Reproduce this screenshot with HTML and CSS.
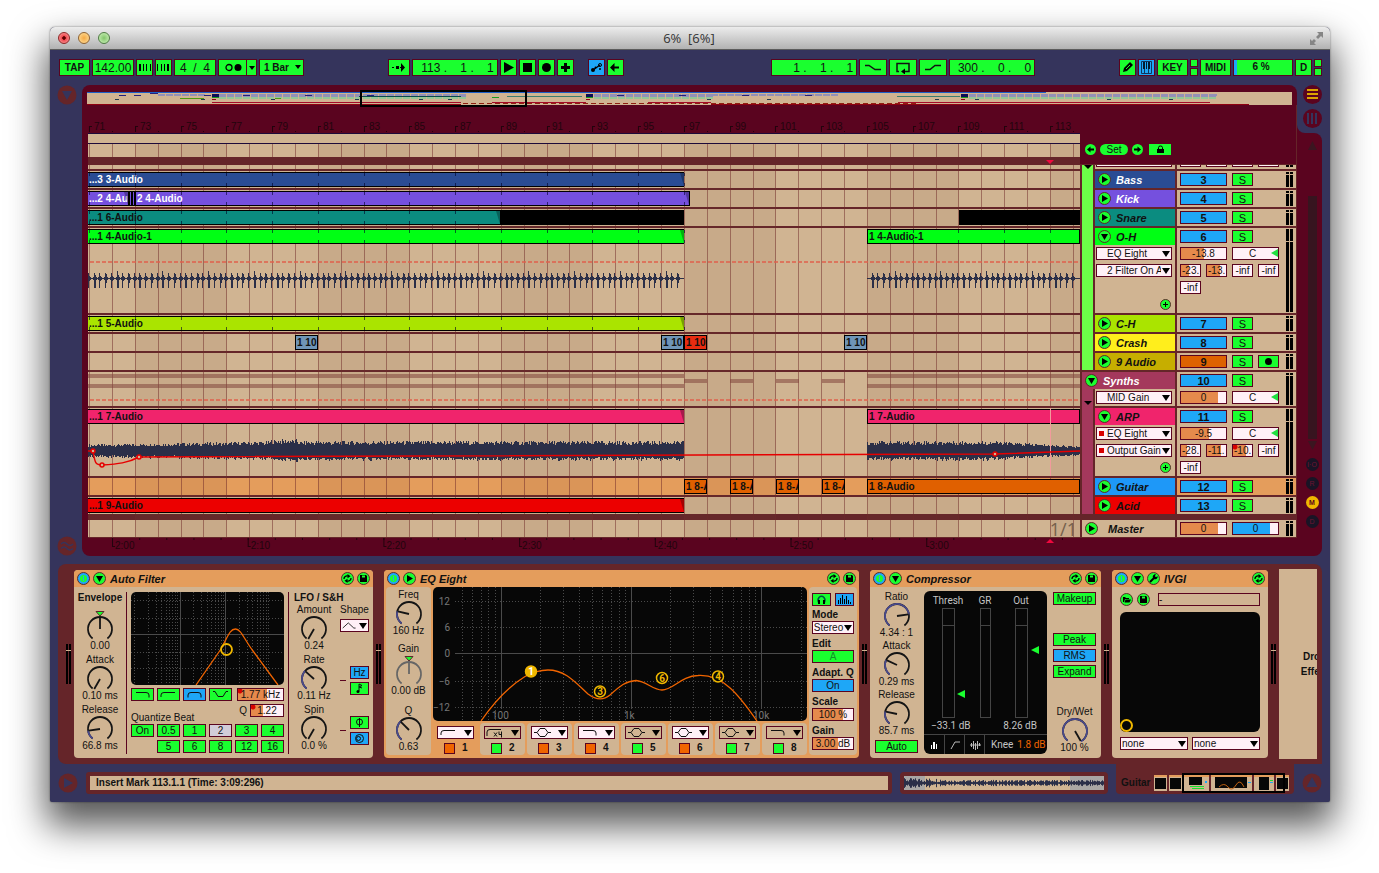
FILE: index.html
```html
<!DOCTYPE html>
<html lang="en">
<head>
<meta charset="utf-8">
<title>6% [6%]</title>
<link rel="stylesheet" href="styles.css">
</head>
<body>
<svg class="defs" aria-hidden="true">
  <defs>
    <symbol id="i-play" viewBox="0 0 13 13"><circle class="disc" cx="6.5" cy="6.5" r="6"/><path d="M4 3v7l6-3.500z"/></symbol>
    <symbol id="i-fold" viewBox="0 0 13 13"><circle class="disc" cx="6.500" cy="6.500" r="6"/><path d="M3 4h7l-3.500 6z"/></symbol>
    <symbol id="i-power" viewBox="0 0 13 13"><circle class="disc-on" cx="6.500" cy="6.500" r="6"/><circle cx="6.500" cy="6.500" r="3.500" fill="#1aff2f"/><path d="M6 4h1v5h-1z" fill="#1ea7f7"/></symbol>
    <symbol id="i-swap" viewBox="0 0 13 13"><circle class="disc" cx="6.500" cy="6.500" r="6"/><path d="M3 7a3 3 0 0 1 4-3M10 6a3 3 0 0 1-4 3" fill="none" stroke="#000" stroke-width="1.300"/><path d="M6.500 2l3 2.200-3 2zM6.500 11l-3-2.200 3-2z"/></symbol>
    <symbol id="i-save" viewBox="0 0 13 13"><circle class="disc" cx="6.500" cy="6.500" r="6"/><path d="M3 3h6l1 1v6H3z"/><path d="M5 3.500h3v2H5z" fill="#1aff2f"/></symbol>
    <symbol id="i-folder" viewBox="0 0 13 13"><circle class="disc" cx="6.500" cy="6.500" r="6"/><path d="M3 4h2l1 1h3v1H5L4 9H3zM5.500 6.500H11L9.500 9.500h-5z"/></symbol>
    <symbol id="i-wrench" viewBox="0 0 13 13"><circle class="disc" cx="6.500" cy="6.500" r="6"/><path d="M3.500 9.500L7 6" stroke="#000" stroke-width="2" stroke-linecap="round"/><path d="M6 6a2.500 2.500 0 0 1 3-3.500L7.800 4l1.200 1.200L10.500 4A2.500 2.500 0 0 1 7 7z"/></symbol>
    <symbol id="i-plus" viewBox="0 0 13 13"><circle class="disc" cx="6.500" cy="6.500" r="5"/><path d="M6 4h1v2h2v1H7v2H6V7H4V6h2z"/></symbol>
    <symbol id="i-left" viewBox="0 0 11 11"><circle cx="5.500" cy="5.500" r="5.500" fill="#1aff2f"/><path d="M2 5.500L5.500 2.500V4.500H9V6.500H5.500V8.500z"/></symbol>
    <symbol id="i-right" viewBox="0 0 11 11"><circle cx="5.500" cy="5.500" r="5.500" fill="#1aff2f"/><path d="M9 5.500L5.500 2.500V4.500H2V6.500H5.500V8.500z"/></symbol>
    <symbol id="f-hp" viewBox="0 0 21 11"><path class="ln" d="M3 8V6q0-2.500 3-2.500h11"/></symbol>
    <symbol id="f-lp" viewBox="0 0 21 11"><path class="ln" d="M4 3.500h10q3 0 3 2.500v2.500"/></symbol>
    <symbol id="f-bp" viewBox="0 0 21 11"><path class="ln" d="M4 8.500V6q0-2.500 3-2.500h7q3 0 3 2.500v2.500"/></symbol>
    <symbol id="f-notch" viewBox="0 0 21 11"><path class="ln" d="M3 2.500h2l3 5h5l3-5h2"/></symbol>
    <symbol id="f-bell" viewBox="0 0 21 11"><path class="ln" d="M2 5.500h3l3-4h5l3 4h3M5 5.500l3 4h5l3-4"/></symbol>
    <symbol id="f-x4" viewBox="0 0 21 11"><path class="ln" d="M2 9V5q0-2.500 3-2.500h11M9 5.500l3 4M12 5.500l-3 4M14 4.500v3h3M16.500 4.500v6"/></symbol>
    <symbol id="f-tri" viewBox="0 0 21 11"><path class="ln" d="M2 8.500l6.500-6 6.500 6h2"/></symbol>
  </defs>
</svg>

<div class="window">
  <header class="titlebar">
    <div class="lights"><button class="light red" aria-label="Close"></button><button class="light amber" aria-label="Minimise"></button><button class="light lime" aria-label="Zoom"></button></div>
    <h1>6%&nbsp; [6%]</h1>
    <button class="expand" aria-label="Full screen"><svg width="15" height="15"><path d="M8 1h6v6l-2-2-3 3-2-2 3-3zM1 8l2 2 2-2 2 2-2 2 2 2H1z" fill="#858585"/></svg></button>
  </header>

  <nav class="toolbar">
    <div class="set">
      <button class="b w31 strong">TAP</button>
      <input class="b w42 num" value="142.00" aria-label="Tempo">
      <button class="b w17" aria-label="Nudge down"><svg width="13" height="11"><path d="M1 2h2v7H1zM5 2h1v7H5zM8 2h1v7H8zM12 2h1v7h-1z"/></svg></button>
      <button class="b w17" aria-label="Nudge up"><svg width="13" height="11"><path d="M0 2h1v7H0zM4 2h1v7H4zM7 2h1v7H7zM10 2h2v7h-2z"/></svg></button>
      <input class="b w42 num" value="4  /  4" aria-label="Time signature">
      <div class="pair"><button class="b w29" aria-label="Metronome"><svg width="18" height="11"><circle cx="5" cy="5.500" r="3" fill="none" stroke="#000" stroke-width="1.300"/><circle cx="14" cy="5.500" r="3.500"/></svg></button><button class="b w11" aria-label="Metronome options"><i class="tri"></i></button></div>
      <div class="pick bar"><select class="b w45 strong" aria-label="Quantization"><option>1 Bar</option></select></div>
    </div>
    <i class="space s84"></i>
    <div class="set">
      <button class="b w22" aria-label="Follow"><svg width="14" height="9"><path d="M0 4h2v1H0zM9 0l4 4.500L9 9z"/><path d="M4 3h3v3H4z"/><path d="M8 4h2v1H8z"/></svg></button>
      <input class="b w86 num end" value="113 .    1 .    1" aria-label="Position">
      <button class="b w17" aria-label="Play"><svg width="11" height="11"><path d="M1 0v11l10-5.500z"/></svg></button>
      <button class="b w17" aria-label="Stop"><svg width="9" height="9"><path d="M0 0h9v9H0z"/></svg></button>
      <button class="b w17" aria-label="Record"><svg width="9" height="9"><circle cx="4.500" cy="4.500" r="4.500"/></svg></button>
      <button class="b w17" aria-label="Overdub"><svg width="9" height="9"><path d="M3 0h3v3h3v3H6v3H3V6H0V3h3z"/></svg></button>
      <button class="b w17 on lead" aria-label="Automation arm"><svg width="13" height="11"><path d="M3 8l7-5" stroke="#000" stroke-width="1.300"/><circle cx="3" cy="8" r="2"/><circle cx="5.500" cy="5.500" r="1"/><circle cx="10" cy="3" r="1.500" fill="none" stroke="#000"/><circle cx="10" cy="7" r="1"/></svg></button>
      <button class="b w17" aria-label="Back to arrangement"><svg width="10" height="9"><path d="M0 4.500L4.500 0v3.500H9v2H4.500V9z"/></svg></button>
    </div>
    <i class="space s148"></i>
    <div class="set">
      <input class="b w86 num end" value="1 .    1 .    1" aria-label="Loop start">
      <button class="b w28" aria-label="Punch in"><svg width="18" height="11"><path class="ln" d="M1 3.500h4l6 4h6" stroke-width="1.500"/></svg></button>
      <button class="b w28" aria-label="Loop"><svg width="16" height="12"><path class="ln" d="M4 9.500H2v-8h12v8H9" stroke-width="1.500"/><path d="M6 9.500l4-3v6z"/></svg></button>
      <button class="b w28" aria-label="Punch out"><svg width="18" height="11"><path class="ln" d="M1 7.500h5l5-4h6" stroke-width="1.500"/></svg></button>
      <input class="b w86 num end" value="300 .    0 .    0" aria-label="Loop length">
    </div>
    <i class="space s83"></i>
    <div class="set">
      <button class="b w17" aria-label="Draw mode"><svg width="13" height="13"><path d="M2 11l1-4 6-6 3 3-6 6z"/><path d="M5 8l4-4" stroke="#1aff2f"/></svg></button>
      <button class="b w17 on" aria-label="Computer keyboard"><svg width="11" height="13"><path d="M.5.500h10v12H.5zM3.500 7v5M7.500 7v5" fill="none" stroke="#12345c"/><path d="M2 1h2v7H2zM5 1h1v7H5zM7 1h2v7H7z" fill="#021a30"/></svg></button>
      <button class="b w31 strong">KEY</button>
      <div class="leds"><i></i><i></i></div>
      <button class="b w31 strong">MIDI</button>
      <output class="b w60 strong cpu">6 %</output>
      <button class="b w17 strong">D</button>
      <div class="leds"><i></i><i></i></div>
    </div>
  </nav>

  <main class="arranger">
    <div class="rail">
      <button class="ghost" aria-label="Browser"><svg width="20" height="20"><circle cx="10" cy="10" r="9.500"/><path d="M5 6h10l-5 9z" class="cut"/></svg></button>
      <button class="ghost" aria-label="Groove pool"><svg width="20" height="20"><circle cx="10" cy="10" r="9.500"/><path d="M4 8q3-3 6 0t6 0M4 12.500q3-3 6 0t6 0" fill="none" stroke="#35345c" stroke-width="1.500"/></svg></button>
    </div>
    <section class="panel">
      <div class="overview"><svg id="overview" viewBox="0 0 1205 13" preserveAspectRatio="none"></svg><i class="viewbox"></i></div>
      <div class="stage">
        <div class="timeline">
          <svg class="ruler" id="ruler" height="28"></svg>
          <div class="scrub"></div>
          <div class="marks"><svg class="gridlines" viewBox="0 0 992 100" preserveAspectRatio="none"></svg></div>
          <div class="band"><i class="locator"></i></div>
          <div class="lanes" id="lanes"><svg class="gridlines" viewBox="0 0 992 100" preserveAspectRatio="none"></svg></div>
          <svg class="clock" id="clock" height="18"></svg>
        </div>
        <div class="heads">
          <div class="locators">
            <button class="bare" aria-label="Previous locator"><svg width="11" height="11"><use href="#i-left"/></svg></button>
            <button class="pill">Set</button>
            <button class="bare" aria-label="Next locator"><svg width="11" height="11"><use href="#i-right"/></svg></button>
            <button class="lock" aria-label="Lock envelopes"><svg width="9" height="9"><path d="M1 4h7v4H1z"/><path d="M2.500 4V2.500q0-1.500 2-1.500t2 1.500V4" fill="none" stroke="#000"/></svg></button>
          </div>
          <div id="heads"></div>
        </div>
      </div>
    </section>
    <aside class="side">
      <div class="views"><div>
        <button class="view" aria-label="Arrangement view"><svg width="19" height="19"><circle cx="9.500" cy="9.500" r="9.500"/><path d="M4 4h11v2H4zM4 8h11v2H4zM4 12h11v2H4z" fill="#dca500"/></svg></button>
        <button class="view" aria-label="Session view"><svg width="19" height="19"><circle cx="9.500" cy="9.500" r="9.500"/><path d="M4 4h2v11H4zM8 4h2v11H8zM12 4h2v11h-2z" fill="#35345c"/></svg></button>
      </div></div>
      <div class="scroller">
        <svg width="9" height="9"><path d="M0 9h9L4.500 0z"/></svg>
        <i class="thumb"></i>
        <svg width="9" height="9"><path d="M0 0h9L4.500 9z"/></svg>
        <div class="dots"><button>I·O</button><button>R</button><button class="lit">M</button><button>D</button></div>
      </div>
    </aside>
  </main>

  <section class="chain">
    <i class="meter2 first"></i>
    <article class="device filter">
      <header><svg width="13" height="13"><use href="#i-power"/></svg><svg width="13" height="13"><use href="#i-fold"/></svg><h2>Auto Filter</h2><svg width="13" height="13"><use href="#i-swap"/></svg><svg width="13" height="13"><use href="#i-save"/></svg></header>
      <div class="filter-body">
        <div class="col env">
          <h3>Envelope</h3>
          <div class="dial mark" data-v="0.00" data-turn="0"></div>
          <div class="dial" data-label="Attack" data-v="0.10 ms" data-turn="-150"></div>
          <div class="dial" data-label="Release" data-v="66.8 ms" data-turn="-98" data-arc="1"></div>
        </div>
        <div class="col centre">
          <svg class="screen" id="filter-screen" width="153" height="93"></svg>
          <div class="row6">
            <button class="k"><svg width="21" height="11"><use href="#f-lp"/></svg></button><button class="k"><svg width="21" height="11"><use href="#f-hp"/></svg></button><button class="k on"><svg width="21" height="11"><use href="#f-bp"/></svg></button><button class="k"><svg width="21" height="11"><use href="#f-notch"/></svg></button>
            <input class="v auto freq" value="1.77 kHz" aria-label="Frequency" style="--v:64%">
          </div>
          <label class="q">Q <input class="v auto" value="1.22" style="--v:38%"></label>
          <p>Quantize Beat</p>
          <div class="row6 beats"><button class="k">On</button><button class="k">0.5</button><button class="k">1</button><button class="k grey">2</button><button class="k">3</button><button class="k">4</button><button class="k second">5</button><button class="k">6</button><button class="k">8</button><button class="k">12</button><button class="k">16</button></div>
        </div>
        <div class="col lfo">
          <h3>LFO / S&amp;H</h3>
          <div class="lfo-grid">
            <div class="dial" data-label="Amount" data-v="0.24" data-turn="-150"></div>
            <div class="shape"><label for="shape">Shape</label><div class="pick"><select class="v" id="shape"><option> </option></select><svg width="18" height="11"><use href="#f-tri"/></svg></div></div>
            <div class="dial" data-label="Rate" data-v="0.11 Hz" data-turn="-48" data-arc="1"></div>
            <div class="sw"><button class="k on">Hz</button><button class="k" aria-label="Sync"><svg width="9" height="11"><path d="M4 1v7M4 1l3 1.500L4 4l3 1" class="ln"/><circle cx="3" cy="8.500" r="1.500"/></svg></button></div>
            <div class="dial" data-label="Spin" data-v="0.0 %" data-turn="-150"></div>
            <div class="sw"><button class="k" aria-label="Phase"><svg width="9" height="11"><circle cx="4.500" cy="5" r="3" class="ln"/><path d="M4.500 1v9" class="ln"/></svg></button><button class="k on" aria-label="Spin mode"><svg width="11" height="11"><circle cx="5.500" cy="5.500" r="4" class="ln"/><circle cx="4.500" cy="5.500" r="2" class="ln"/></svg></button></div>
          </div>
        </div>
      </div>
    </article>
    <i class="meter2"></i>
    <article class="device eq">
      <header><svg width="13" height="13"><use href="#i-power"/></svg><svg width="13" height="13"><use href="#i-play"/></svg><h2>EQ Eight</h2><svg width="13" height="13"><use href="#i-swap"/></svg><svg width="13" height="13"><use href="#i-save"/></svg></header>
      <div class="eq-body">
        <div class="card knobs">
          <div class="dial" data-label="Freq" data-v="160 Hz" data-turn="-77" data-arc="1"></div>
          <div class="dial mark dim" data-label="Gain" data-v="0.00 dB" data-turn="0"></div>
          <div class="dial" data-label="Q" data-v="0.63" data-turn="-45" data-arc="1"></div>
        </div>
        <div class="eq-main">
          <svg class="screen" id="eq-screen" width="374" height="134"></svg>
          <div class="bands" id="bands"></div>
        </div>
        <div class="card opts">
          <div class="two"><button class="k" aria-label="Audition"><svg width="11" height="11"><path d="M3 9Q1 6 3 3.500q2.500-2.500 5 0Q10 6 8 9" fill="none" stroke="#054" stroke-width="1.500"/><path d="M2 6h2v4H2zM7 6h2v4H7z"/></svg></button><button class="k on" aria-label="Analyzer"><svg width="15" height="11"><path d="M1 6h1v4H1zM3 4h1v6H3zM5 1h1v9H5zM7 5h1v5H7zM9 2h1v8H9zM11 6h1v4h-1zM13 8h1v2h-1z"/></svg></button></div>
          <label for="mode">Mode</label><div class="pick"><select class="v" id="mode"><option>Stereo</option></select></div>
          <label for="edit">Edit</label><button class="k faint" id="edit">A</button>
          <label for="adapt">Adapt. Q</label><button class="k on" id="adapt">On</button>
          <label for="scale">Scale</label><input class="v" id="scale" value="100 %" style="--v:74%">
          <label for="gain">Gain</label><input class="v" id="gain" value="3.00 dB" style="--v:62%">
        </div>
      </div>
    </article>
    <i class="meter2"></i>
    <article class="device comp">
      <header><svg width="13" height="13"><use href="#i-power"/></svg><svg width="13" height="13"><use href="#i-fold"/></svg><h2>Compressor</h2><svg width="13" height="13"><use href="#i-swap"/></svg><svg width="13" height="13"><use href="#i-save"/></svg></header>
      <div class="comp-body">
        <div class="col">
          <div class="dial" data-label="Ratio" data-v="4.34 : 1" data-turn="82" data-arc="1"></div>
          <div class="dial" data-label="Attack" data-v="0.29 ms" data-turn="-65" data-arc="1"></div>
          <div class="dial" data-label="Release" data-v="85.7 ms" data-turn="-78" data-arc="1"></div>
          <button class="k">Auto</button>
        </div>
        <div class="black">
          <div class="slots">
            <div><span>Thresh</span><i></i></div><div><span>GR</span><i class="thin"></i></div><div><span>Out</span><i></i></div>
          </div>
          <div class="reads"><span>−33.1 dB</span><span>8.26 dB</span></div>
          <div class="modes"><button aria-label="Collapsed view"><svg width="12" height="12"><path d="M3 6h1v4H3zM5 3h2v7H5zM8 5h1v5H8z" fill="#fff"/></svg></button><button aria-label="Curve view"><svg width="12" height="12"><path d="M2 10l4-7h5" fill="none" stroke="#bbb"/></svg></button><button aria-label="Activity view"><svg width="12" height="12"><path d="M2.500 4v4M4.500 2v8M6.500 4v7M8.500 2v8M10.500 4v3M1 6h11" stroke="#bbb" fill="none"/></svg></button><span>Knee <b>1.8 dB</b></span></div>
          <i class="arrow thr"></i><i class="arrow out"></i>
        </div>
        <div class="col right">
          <button class="k">Makeup</button>
          <div class="trio"><button class="k">Peak</button><button class="k on">RMS</button><button class="k">Expand</button></div>
          <div class="dial" data-label="Dry/Wet" data-v="100 %" data-turn="150" data-arc="1"></div>
        </div>
      </div>
    </article>
    <i class="meter2"></i>
    <article class="device ivgi">
      <header><svg width="13" height="13"><use href="#i-power"/></svg><svg width="13" height="13"><use href="#i-fold"/></svg><svg width="13" height="13"><use href="#i-wrench"/></svg><h2>IVGI</h2><svg width="13" height="13"><use href="#i-swap"/></svg></header>
      <div class="ivgi-body">
        <div class="preset"><button class="bare" aria-label="Open preset"><svg width="13" height="13"><use href="#i-folder"/></svg></button><button class="bare" aria-label="Save preset"><svg width="13" height="13"><use href="#i-save"/></svg></button><input value="-" aria-label="Preset name"></div>
        <div class="pad"><svg width="13" height="13"><circle cx="6.500" cy="6.500" r="5.500" fill="none" stroke="#efb700" stroke-width="2"/></svg></div>
        <div class="params"><div class="pick"><select class="v" aria-label="X parameter"><option>none</option></select></div><div class="pick"><select class="v" aria-label="Y parameter"><option>none</option></select></div></div>
      </div>
    </article>
    <i class="meter2"></i>
    <div class="drop"><p>Drop Audio<br>Effects Here</p></div>
  </section>

  <footer class="status">
    <button class="ghost" aria-label="Info view"><svg width="20" height="20"><circle cx="10" cy="10" r="9.500"/><path d="M6 5v10l9-5z" class="cut"/></svg></button>
    <p class="info">Insert Mark 113.1.1 (Time: 3:09:296)</p>
    <svg class="sample" id="sample" width="200" height="14" viewBox="0 0 200 15" preserveAspectRatio="none"></svg>
    <div class="tab"><span>Guitar</span>
      <div class="minis"><svg width="136" height="16" id="minis"></svg><i class="mini-view"></i></div>
    </div>
    <button class="ghost" aria-label="Detail view"><svg width="20" height="20"><circle cx="10" cy="10" r="9.500"/><path d="M4.500 14h11L10 4z" class="cut"/></svg></button>
  </footer>
</div>
<script src="app.js"></script>
</body>
</html>
```

FILE: styles.css
```css
:root {
  --navy: #35345c;
  --wine: #5a041f;
  --brick: #652529;
  --tan: #d0b492;
  --amber: #e49d5c;
  --green: #1aff2f;
  --blue: #1ea7f7;
  --field: #fff0f7;
  --fill: #e58a4c;
}
* { box-sizing: border-box; }
body {
  margin: 0;
  padding: 27px 49px 71px 50px;
  background: #fff;
  color: #111;
  font: 10px/12px "Liberation Sans", Arial, sans-serif;
  overflow: hidden;
}
h1, h2, h3, p { margin: 0; font-size: 10px; }
button, input, select { font: inherit; color: inherit; padding: 0; margin: 0; border-radius: 0; outline: 0; }
button { display: flex; align-items: center; justify-content: center; }
svg { display: block; flex: none; }
i { display: block; }
.defs { position: absolute; width: 0; height: 0; }
.disc { fill: #1aff2f; stroke: #5a2a2a; }
.disc-on { fill: #1ea7f7; stroke: #5a2a2a; }
.ln { fill: none; stroke: #111; }
.bare { background: none; border: 0; }

.window {
  background: var(--navy);
  border-radius: 5px 5px 2px 2px;
  box-shadow: 0 0 2px rgba(0,0,0,.5), 0 20px 36px 4px rgba(0,0,0,.66);
}
.titlebar {
  display: grid;
  grid-template-columns: 1fr auto 1fr;
  align-items: center;
  height: 23px;
  padding: 0 6px 0 8px;
  border-radius: 5px 5px 0 0;
  border-bottom: 1px solid #5c5c5c;
  background: linear-gradient(#ececec, #b2b2b2);
}
.titlebar h1 { padding-right: 4px; font: 13px/20px "Open Sans", sans-serif; color: #333; }
.lights { display: flex; gap: 8px; }
.light { width: 12px; height: 12px; border: 1px solid #6b4a3a; border-radius: 50%; }
.light.red { background: radial-gradient(#5b0000 0 20%, #f04a50 30%, #ffb0b0); border-color: #8e2525; }
.light.amber { background: radial-gradient(#f5a943, #ffe2a0); border-color: #8f6230; }
.light.lime { background: radial-gradient(#82c56a, #d2f5c0); border-color: #4f7b43; }
.expand { justify-self: end; border: 0; background: none; }

.toolbar { display: flex; padding: 9px 8px 9px 9px; }
.set, .pair { display: flex; gap: 2px; }
.pair { gap: 0; }
.pair .w11 { margin-left: -1px; }
.space { flex: 84 1 0; }
.s148 { flex-grow: 148; }
.b { height: 17px; border: 1px solid var(--wine); background: var(--green); text-align: center; }
.num { font-size: 12px; white-space: pre; }
.end { text-align: right; padding-right: 3px; }
.strong { font-weight: bold; }
.on { background: var(--blue) !important; }
.lead { margin-left: 12px; }
.w11 { width: 11px; } .w17 { width: 17px; } .w22 { width: 22px; } .w28 { width: 28px; }
.w29 { width: 29px; } .w31 { width: 31px; } .w42 { width: 42px; } .w45 { width: 45px; }
.w60 { width: 60px; } .w86 { width: 86px; }
.cpu { line-height: 14px; background: linear-gradient(90deg, var(--blue) 3px, var(--green) 3px); padding-right: 4px; }
.leds { display: grid; gap: 1px; width: 8px; }
.leds i { border: 1px solid var(--wine); background: var(--green); }
.tri { border: 3px solid transparent; border-top: 4px solid #000; border-bottom: 0; }
.pick { position: relative; }
.pick select { appearance: none; width: 100%; padding-right: 10px; text-align: center; }
.pick.bar select { width: 45px; padding: 0 14px 0 4px; text-align: left; }
.pick::after { content: ""; position: absolute; right: 2px; top: 4px; border: 4px solid transparent; border-top: 6px solid #000; border-bottom: 0; pointer-events: none; }
.pick.bar::after { border-width: 4px 3px 0; right: 3px; top: 6px; }
.pick svg { position: absolute; left: 1px; top: 1px; }

.arranger { display: flex; padding-right: 8px; }
.rail { width: 32px; display: flex; flex-direction: column; justify-content: space-between; align-items: flex-end; padding-right: 5px; }
.ghost { border: 0; background: none; fill: var(--brick); }
.cut { fill: var(--navy); }
.panel { flex: 1; min-width: 0; padding: 7px 0 0 5px; background: var(--wine); border-radius: 8px 8px 0 8px; }
.overview { position: relative; height: 13px; margin-right: 5px; background: var(--tan); }
.overview svg { width: 100%; height: 13px; }
.viewbox { position: absolute; left: 22.65%; width: 13.9%; top: -2px; height: 17px; border: 2px solid #000; }
.stage { display: grid; grid-template-columns: minmax(0, 1fr) 217px; padding-left: 1px; }
.ruler, .clock { width: 100%; font-size: 10px; fill: #22040d; }
.scrub { height: 11px; background: var(--tan); border: solid #1d0a3a; border-width: 1px 0; }
.marks { position: relative; height: 13px; background: var(--tan); }
.band { height: 8px; background: var(--brick); }
.locator { position: relative; left: 97%; top: 3px; width: 0; border: 4px solid transparent; border-top: 4px solid #f0083e; border-bottom: 0; margin-left: -4px; }
.lanes { position: relative; }
.gridlines { position: absolute; inset: 0; width: 100%; height: 100%; z-index: 1; pointer-events: none; }
.lane { position: relative; height: calc(var(--rows) * 17px + 2px); background: var(--tan); border-bottom: 2px solid var(--brick); }
.lane.sliver, .track.sliver { height: 6px; overflow: hidden; }
.lane.amber { background: var(--amber); }
.lane.last { border-bottom-width: 1px; height: 18px; }
.lane > svg { position: absolute; left: 0; top: 0; width: 100%; height: 100%; z-index: 3; }
.before-last { border-bottom-width: 6px !important; height: 23px !important; }
.clip {
  position: absolute; top: 1px; height: 15px; z-index: 2; overflow: hidden;
  border: solid #000; border-width: 1px 0; padding-left: 1px;
  font-weight: bold; line-height: 13px; white-space: nowrap;
}
.clip.boxed { border-width: 1px; }
.clip.faded::after { content: ""; position: absolute; right: 0; top: 0; border-top: 13px solid rgba(0,0,0,.3); border-left: 4px solid transparent; }
.step { position: absolute; right: 3px; bottom: 1px; z-index: 3; font: 18px/14px "Open Sans", sans-serif; color: #75604c; }

.heads { border-right: 1px solid var(--brick); margin-bottom: 18px; }
#heads { border-left: 2px solid var(--brick); border-top: 1px solid var(--brick); }
.locators { display: flex; align-items: flex-end; gap: 4px; height: 59px; padding: 0 0 9px 5px; }
.pill { width: 28px; height: 11px; border: 0; border-radius: 6px; background: var(--green); }
.lock { width: 22px; height: 11px; margin-left: 2px; border: 0; background: var(--green); }
.group { display: flex; background: var(--strip); }
.strip { width: 13px; border-right: 2px solid var(--brick); }
.strip.top { border-bottom: 2px solid var(--brick); }
.strip i { margin: 0 0 0 2px; width: 8px; border: 4px solid transparent; border-top: 4px solid #000; border-bottom: 0; }
.strip.low { border-bottom: 6px solid var(--brick); }
.strip.low i { margin-top: 29px; }
.group-body { flex: 1; min-width: 0; }
.track { display: grid; grid-template-columns: minmax(0, 1fr) 119px; height: calc(var(--rows) * 17px + 2px); border-bottom: 2px solid var(--brick); background: var(--tan); }
.track.amber { background: var(--amber); }
.track.last { border-bottom-width: 1px; height: 18px; }
.name { position: relative; border-right: 2px solid var(--brick); }
.sliver .name { padding: 0 3px 0 1px; }
.sliver .mixer { padding-top: 0; }
.stub { height: 2px; background: var(--field); border: solid var(--wine); border-width: 0 1px 1px; }
.label { display: flex; align-items: center; gap: 5px; height: 17px; padding-left: 3px; background: var(--c); font: italic bold 11px/16px "Liberation Sans", Arial, sans-serif; }
.label button { border: 0; background: none; }
.label.wide { position: relative; margin-left: -13px; z-index: 1; }
.label.roomy { gap: 10px; }
.chooser { display: grid; gap: 4px; padding: 2px 3px 2px 1px; }
.chooser .pick select { padding-left: 10px; padding-right: 10px; text-align: left; text-overflow: clip; }
.chooser.flagged .pick::before { content: ""; position: absolute; left: 3px; top: 4px; width: 5px; height: 5px; background: #d80000; }
.add { position: absolute; right: 3px; bottom: 2px; }
.mixer { display: flex; justify-content: space-between; padding: 1px 3px; }
.cells { display: grid; grid-template-columns: repeat(4, 21px); grid-auto-rows: 13px; gap: 4px 5px; padding-top: 1px; align-content: start; }
.sliver .cells { grid-auto-rows: 2px; padding: 0; }
.cells .wide { grid-column: span 2; }
.cells .wide.start { grid-column: 1 / span 2; }
.cells button { border: 1px solid var(--wine); background: var(--green); font-size: 11px; }
.cells .act { grid-column: 1 / span 2; background: var(--blue); font-weight: bold; }
.cells .act.off { background: #dd6200; }
.v { height: 13px; width: 100%; min-width: 0; border: 1px solid var(--wine); background: linear-gradient(90deg, var(--fill) var(--v, 0%), var(--field) 0); text-align: center; line-height: 11px; }
.cells .v.cut-off { text-align: left; padding-left: 1px; }
.cells .v.cool { --fill: #1ea7f7; }
.pan { position: relative; }
.pan .v { padding-right: 6px; display: block; }
.pan::after { content: ""; position: absolute; right: 1px; top: 2px; border: 4px solid transparent; border-right: 7px solid #20e040; border-left: 0; }
.auto, .has-dot { background-image: radial-gradient(circle at 2px 2px, #d80000 2px, transparent 3px), linear-gradient(90deg, var(--fill) var(--v, 0%), var(--field) 0); }
.bars { width: 7px; background: linear-gradient(90deg, #000 3px, transparent 3px 4px, #000 4px); position: relative; }
.bars::after { content: ""; position: absolute; inset: 2px 0 auto; height: 1px; background: var(--tan); }
.bars.tall::after { top: 12px; }

.side { width: 25px; display: flex; flex-direction: column; }
.views { background: var(--wine); }
.views > div { display: grid; gap: 5px; justify-items: end; align-content: start; height: 48px; background: var(--navy); border-bottom-left-radius: 8px; }
.view { border: 0; background: none; fill: var(--wine); }
.scroller { flex: 1; display: flex; flex-direction: column; align-items: center; padding: 8px 0 28px 5px; background: var(--wine); border-radius: 0 8px 8px 0; fill: #3b1520; }
.thumb { flex: 1; width: 9px; margin: 46px 0 2px; background: #37141f; }
.dots { display: grid; gap: 6px; margin-top: 8px; }
.dots button { width: 13px; height: 13px; border: 0; border-radius: 50%; background: #191425; color: #6d1533; font-size: 7px; line-height: 13px; }
.dots .lit { background: #efb700; color: #5a041f; font-weight: bold; }

.chain { display: flex; gap: 3px; height: 200px; margin: 8px 8px 0; padding: 6px 5px 6px 8px; background: var(--brick); border-radius: 8px 8px 0 8px; }
.meter2 { flex: none; width: 5px; height: 40px; margin-top: 74px; background: linear-gradient(transparent 6px, #d0b492 6px 7px, transparent 7px), linear-gradient(90deg, #000 2px, var(--brick) 2px 3px, #000 3px); }
.device { flex: none; border-radius: 4px; background: var(--tan); overflow: hidden; }
.device header { display: flex; align-items: center; gap: 3px; height: 17px; padding: 0 3px; background: var(--amber); }
.device h2 { flex: 1; padding-left: 1px; font: italic bold 11px/16px "Liberation Sans", Arial, sans-serif; }
.k { height: 13px; border: 1px solid var(--wine); background: var(--green); line-height: 11px; white-space: nowrap; }
.k.grey { background: #d2ccd8; }
.k.faint { color: #158f2a; }
.screen { border-radius: 5px; background: #070707; }
.col { display: flex; flex-direction: column; }
.dial { display: flex; flex-direction: column; align-items: center; height: 50px; white-space: nowrap; }
.dial span { height: 12px; }

.filter { width: 299px; }
.filter-body { display: grid; grid-template-columns: 52px 163px 1fr; padding-top: 5px; height: 166px; }
.env { align-items: center; }
.env h3, .lfo h3 { height: 12px; }
.centre { padding: 0 4px; border: solid var(--wine); border-width: 0 1px; }
.row6 { display: grid; grid-template-columns: repeat(6, 23px); gap: 3px; margin-top: 3px; }
.freq { grid-column: 5 / span 2; justify-self: end; width: 47px; }
.q { display: flex; align-items: center; justify-content: flex-end; gap: 3px; margin-top: 3px; }
.q input { width: 34px; }
.centre p { height: 7px; line-height: 2px; font-weight: normal; }
.beats { margin-top: 0; }
.beats .second { grid-column-start: 2; }
.lfo { padding: 0 4px 0 5px; }
.lfo-grid { display: grid; grid-template-columns: 40px 29px; justify-content: space-between; }
.shape label { display: block; height: 15px; }
.sw { display: grid; gap: 3px; justify-items: end; align-content: start; padding-top: 12px; background: linear-gradient(var(--wine), var(--wine)) 0 26px / 6px 1px no-repeat; }
.sw .k { width: 19px; }

.eq { width: 475px; background: var(--amber); }
.eq-body { display: flex; gap: 2px; padding: 0 2px; }
.card { height: 168px; border-radius: 4px; background: var(--tan); }
.knobs { width: 45px; padding-top: 2px; display: flex; flex-direction: column; justify-content: space-between; }
.knobs .mark { height: 58px; }
.bands { display: grid; grid-template-columns: repeat(8, 1fr); gap: 2px; margin-top: 2px; }
.bandcell { height: 32px; padding: 3px 4px; border-radius: 4px; background: var(--tan); }
.bandcell.sel { background: none; }
.bandcell .pick select { display: block; }
.bandcell.off .pick select { background: var(--tan); }
.bandcell label { display: flex; align-items: center; gap: 7px; padding: 3px 0 0 7px; font-weight: bold; }
.bandcell input { appearance: none; width: 11px; height: 11px; background: var(--green); border: 1px solid var(--wine); }
.bandcell input:checked { background: #f06400; }
.opts { display: flex; flex-direction: column; width: 48px; padding: 6px 3px 0; }
.opts > label { height: 13px; padding-top: 1px; font-weight: bold; white-space: nowrap; }
.opts > .k, .opts > .v, .opts > .pick { flex: none; height: 13px; margin-bottom: 3px; width: 42px; }
.opts select { display: block; padding-right: 9px; }
.two { display: grid; grid-template-columns: 19px 19px; gap: 4px; margin-bottom: 2px; }

.comp { width: 231px; }
.comp-body { display: grid; grid-template-columns: 43px 123px 43px; gap: 6px; padding: 4px 5px; }
.comp .dial { height: 49px; }
.comp .col .k { margin-top: 2px; }
.comp .right { padding-top: 1px; }
.comp .right > .k { margin-top: 0; }
.trio { display: grid; gap: 3px; margin: 28px 0 28px; }
.comp .trio .k { margin: 0; }
.black { position: relative; display: flex; flex-direction: column; height: 163px; border-radius: 6px; background: #070707; color: #c4c4c4; font: 10px/12px Roboto, sans-serif; }
.slots { display: grid; grid-template-columns: 38px 36px 36px; padding: 4px 0 0 5px; text-align: center; }
.slots i { height: 110px; width: 13px; margin: 1px auto 0; border: 1px solid #444; background: linear-gradient(#444, #444) 0 16px / 100% 1px no-repeat; }
.slots .thin { width: 11px; }
.reads { display: flex; justify-content: space-between; padding: 2px 10px 0 7px; }
.modes { display: grid; grid-template-columns: 21px 20px 20px 1fr; margin-top: auto; height: 20px; border-top: 1px solid #444; }
.modes button { border: 0; border-right: 1px solid #444; background: none; }
.modes span { display: flex; align-items: center; gap: 4px; padding-left: 6px; white-space: nowrap; }
.modes b { font-weight: normal; color: #f06400; }
.arrow { position: absolute; border: 4px solid transparent; border-right: 8px solid var(--green); border-left: 0; }
.thr { left: 33px; top: 99px; }
.out { left: 107px; top: 55px; }

.ivgi { width: 156px; }
.ivgi-body { display: grid; grid-template-columns: minmax(0, 1fr); gap: 6px; padding: 6px 8px; }
.preset { display: flex; gap: 4px; }
.preset input { flex: 1; min-width: 0; height: 13px; margin-left: 4px; border: 1px solid var(--wine); background: var(--tan); }
.pad { display: flex; align-items: flex-end; height: 120px; border-radius: 6px; background: #070707; }
.params { display: grid; grid-template-columns: 1fr 1fr; gap: 4px; margin-top: -1px; }
.params select { text-align: left; padding-left: 1px; }
.drop { flex: 1; min-width: 0; margin: -1px 0; padding: 80px 0 0 19px; overflow: hidden; background: var(--tan); font-weight: bold; }
.drop p { width: 64px; line-height: 15px; text-align: center; white-space: nowrap; }

.status { display: flex; align-items: center; height: 38px; padding: 8px; }
.info { flex: 1; height: 22px; margin: 0 8px; padding-left: 6px; border: 4px solid var(--brick); border-radius: 3px; background: var(--tan); font-weight: bold; line-height: 13px; }
.sample { box-sizing: content-box; border: 4px solid var(--brick); border-radius: 4px; background: var(--brick); }
.tab { display: flex; align-items: center; gap: 4px; width: 178px; height: 30px; margin: -8px 8px 0 8px; padding: 8px 0 0 5px; border-radius: 0 0 4px 4px; background: var(--brick); font-weight: bold; }
.tab span { width: 29px; }
.minis { position: relative; }
.mini-view { position: absolute; left: 28px; top: -2px; width: 103px; height: 20px; border: 2px solid #000; }
```

FILE: app.js
```js
const BAR = 22.88;
const W = 992;
const rect = (x, y, w, h, fill) => `<rect x="${x}" y="${y}" width="${w}" height="${h}" fill="${fill}"/>`;
const pct = n => (n / W * 100).toFixed(2) + '%';
const rnd = n => { const s = Math.sin(n * 12.9898) * 43758.5453; return s - Math.floor(s); };

/* bar grid */
let g = '';
for (let i = 0; i < 12; i += 2) g += rect(Math.round(1 + BAR * (2 + i * 4)), 0, Math.round(BAR * 4), 100, 'rgba(120,80,50,.09)');
for (let i = 0; i < 44; i++) g += rect(Math.round(1 + BAR * i), 0, 1, 100, 'rgba(110,40,40,.5)');
document.querySelectorAll('.gridlines').forEach(s => { s.innerHTML = g; });

let r = '';
for (let i = 0; i < 44; i++) {
  const x = Math.round(1 + BAR * i);
  if (i % 2) r += `<rect x="${pct(x)}" y="26" width="1" height="1"/>`;
  else r += `<svg x="${pct(x)}" overflow="visible"><path d="M0 27V21h3v1H1v5z"/><text x="5" y="25">${71 + i}</text></svg>`;
}
document.getElementById('ruler').innerHTML = r;

let c = '';
['2:00', '2:10', '2:20', '2:30', '2:40', '2:50', '3:00'].forEach((t, i) => {
  c += `<svg x="${pct(24 + i * 135.7)}" overflow="visible"><path d="M0 0h1v8h2v1H0z"/><text x="3" y="11">${t}</text></svg>`;
});
for (let i = 0; i < 36; i++) c += `<rect x="${pct(24 + i * 27.14)}" y="0" width="1" height="2"/>`;
c += `<svg x="${pct(962)}" overflow="visible"><path d="M-4 5h8L0 1z" fill="#f0083e"/></svg>`;
document.getElementById('clock').innerHTML = c;

/* arrangement overview */
let o = rect(0, 0, 959, 1, '#1c5fc8') + rect(0, 12, 374, 1, '#8f0010') + rect(624, 12, 538, 1, '#8f0010');
const tiles = (a, b, green) => {
  for (let x = a; x < b; x += 8) {
    o += rect(x, 2, 7, green ? 3 : 2, '#9490b8');
    if (green) o += rect(x, 5, 7, 2, '#94c795');
  }
};
tiles(71, 118, false); tiles(132, 374, true); tiles(507, 624, true); tiles(624, 749, false); tiles(882, 1123, true); tiles(1123, 1130, false);
[125, 499, 874].forEach(x => { o += rect(x, 2, 7, 3, '#0c0c58') + rect(x, 5, 7, 1, '#1a9c1a') + rect(x, 7, 4, 1, '#8f0010'); });
[[63, 1, 8], [32, 3, 7], [47, 3, 7], [117, 3, 7], [156, 3, 7], [218, 3, 7], [280, 3, 7], [530, 3, 7], [592, 3, 7], [655, 3, 7], [718, 3, 7]].forEach(([x, y, w]) => { o += rect(x, y, w, 1, '#25207c'); });
[28, 114, 184, 268, 332, 361, 620, 680, 848, 888, 1020, 1082].forEach(x => { o += rect(x, 7, 4, 1, '#22394f'); });
o += rect(272, 4, 102, 1, '#0b4a4a') + rect(420, 4, 75, 1, '#3d7d70') + rect(810, 4, 63, 1, '#3d7d70') + rect(93, 6, 24, 1, '#4c9c10') + rect(188, 6, 6, 1, '#4c9c10') + rect(405, 5, 7, 1, '#1a9c1a');
[[125, 249], [405, 94], [561, 63], [811, 100], [874, 249]].forEach(([x, w]) => { o += rect(x, 10, w, 1, '#a50a28'); });
for (let x = 376; x < 830; x += 8) o += rect(x, 11, 5, 1, '#8f2010');
document.getElementById('overview').innerHTML = o;

/* waveforms */
const hats = (from, to) => {
  let s = rect(from, 50, to - from, 1, '#2b2f48');
  for (let i = Math.ceil(from / 5.72); i * 5.72 < to - 3; i++) {
    const x = Math.round(i * 5.72), wide = i % 4 === 3 ? 2 : 1, big = i % 8 === 5;
    s += rect(x, big ? 43 : 45, 1, 15, '#2b2f48') + rect(x, 46, wide, 9, '#2b2f48') + rect(x - 1, 49, 4, 3, '#2b2f48') + rect(x + 1, 48, 1, 5, '#2b2f48');
    if (i % 4 === 1) s += rect(x, 47, 2, 13, '#2b2f48');
  }
  return s;
};
const pads = (from, to, level) => {
  let s = '';
  for (let x = from; x < to; x++) {
    const a = level(x), up = a + rnd(x) * a * .7, dn = a + rnd(x + 700) * a * .6;
    s += rect(x, Math.round(43 - up), 1, Math.round(up + dn), '#2b2f48');
  }
  return s;
};
const dashes = y => `<path d="M2 ${y}H${W}" stroke="#e0604c" stroke-width="1.500" stroke-dasharray="4 2"/>`;
const node = (x, y) => `<circle cx="${x}" cy="${y}" r="2" fill="#d0b492" stroke="#e60000" stroke-width="1.500"/>`;
const ghosts = [[596, 23], [642, 23], [688, 23], [734, 23]].map(([x, w]) => rect(x, 7, w, 4, 'rgba(130,70,60,.55)')).join('');
const twin = (x, w) => rect(x, 2, w, 4, 'rgba(130,70,60,.55)') + rect(x, 12, w, 4, 'rgba(130,70,60,.55)');

const tracks = [
  { sliver: true, rows: 0 },
  { name: 'Bass', n: 3, c: '#2a4c94', light: 1, ticks: [0, 596], clips: [[0, 596, '...3 3-Audio']] },
  { name: 'Kick', n: 4, c: '#7550de', light: 1, ticks: [0, 602], clips: [[0, 40, '...2 4-Audio'], [47, 555, '2 4-Audio']], art: rect(40, 1, 8, 15, '#000') + rect(42, 2, 1, 13, '#7550de') + rect(45, 2, 1, 13, '#7550de') },
  { name: 'Snare', n: 5, c: '#0b8c80', ticks: [0, 410], clips: [[0, 412, '...1 6-Audio'], [412, 184, '', '#000'], [871, 121, '', '#000']] },
  { name: 'O-H', n: 6, c: '#00ff14', rows: 5, open: 1, ticks: [0, 992], clips: [[0, 596, '...1 4-Audio-1'], [779, 213, '1 4-Audio-1']], art: dashes(34) + hats(0, 596) + hats(779, 992), pick: ['EQ Eight', '2 Filter On A'], vol: ['-13.8', 52], sends: [['-23.', 42], ['-13.', 66], ['-inf', 0], ['-inf', 0], ['-inf', 0]] },
  { name: 'C-H', n: 7, c: '#aae400', ticks: [0, 596], clips: [[0, 596, '...1 5-Audio']] },
  { name: 'Crash', n: 8, c: '#ffee1c', clips: [[207, 23, '1 10', '#6f95b8'], [573, 23, '1 10', '#6f95b8'], [596, 23, '1 10', '#e82c10'], [756, 23, '1 10', '#6f95b8']] },
  { name: '9 Audio', n: 9, c: '#c6ae00', off: 1, rec: 1, clips: [] },
  { name: 'Synths', n: 10, c: '#a4385c', light: 1, rows: 2, open: 1, head: 1, clips: [], art: twin(0, 596) + ghosts + twin(779, 213) + dashes(28), pick: ['MID Gain'], vol: ['0', 83] },
  { name: 'ARP', n: 11, c: '#f0246c', rows: 4, open: 1, clips: [[0, 596, '...1 7-Audio'], [779, 213, '1 7-Audio']], flagged: 1, pick: ['EQ Eight', 'Output Gain'], vol: ['-9.5', 62], sends: [['-28.', 34], ['-11.', 72], ['-10.', 70, 1], ['-inf', 0], ['-inf', 0]],
    art: pads(0, 596, x => Math.min(6, 4 + x / 100) + (x > 182 && x < 210 ? 1 : 0)) + pads(779, 992, x => x < 900 ? 6 : 6 - (x - 900) / 30) + rect(962, 0, 1, 68, '#f29a9c') + '<path d="M0 43h5C7 56 8 57 14 57C30 56 40 55 51 49L907 46L992 43" fill="none" stroke="#e60000" stroke-width="1.500"/>' + node(5, 43) + node(14, 57) + node(51, 49) + node(907, 46) },
  { name: 'Guitar', n: 12, c: '#1e98f8', amber: 1, clips: [[596, 23, '1 8-A', '#e06000'], [642, 23, '1 8-A', '#e06000'], [688, 23, '1 8-A', '#e06000'], [734, 23, '1 8-A', '#e06000'], [779, 213, '1 8-Audio', '#e06000']] },
  { name: 'Acid', n: 13, c: '#ec0000', beforeLast: 1, clips: [[0, 596, '...1 9-Audio']] },
  { name: 'Master', master: 1, c: '#d0b492', clips: [] }
];

document.getElementById('lanes').insertAdjacentHTML('beforeend', tracks.map(t => {
  const rows = t.rows ?? 1;
  const cls = `lane${t.sliver ? ' sliver' : ''}${t.amber ? ' amber' : ''}${t.master ? ' last' : ''}${t.beforeLast ? ' before-last' : ''}`;
  const clips = (t.clips || []).map(([x, w, text, c]) =>
    `<div class="clip${x ? ' boxed' : ''}${w > 25 && c !== '#000' && x + w < 980 ? ' faded' : ''}" style="left:${pct(x)};width:${pct(w)};background:${c || t.c};color:${t.light ? '#fff' : '#111'}">${text}</div>`).join('');
  const h = rows * 17;
  let ticks = '';
  if (t.ticks) for (let x = 1; x < t.ticks[1]; x += BAR * 2) if (x < 596 || x > 780) ticks += rect(Math.round(x), 2, 1, 3, 'rgba(0,0,40,.6)') + rect(Math.round(x), 12, 1, 3, 'rgba(0,0,40,.6)');
  const art = t.art || ticks ? `<svg viewBox="0 0 ${W} ${h}" preserveAspectRatio="none">${ticks}${t.art || ''}</svg>` : '';
  return `<div class="${cls}" style="--rows:${rows}">${clips}${art}${t.master ? '<span class="step">1/1</span>' : ''}</div>`;
}).join(''));

const field = (v, p, cls, label) => `<input class="v ${cls}" value="${v}" aria-label="${label}" style="--v:${p}%">`;
const head = t => {
  if (t.sliver) return '<div class="track sliver"><div class="name"><div class="stub"></div></div><div class="mixer"><div class="cells">' + '<div class="stub"></div>'.repeat(4) + '</div><i class="bars"></i></div></div>';
  const rows = t.rows ?? 1;
  const icon = `<button aria-label="Unfold ${t.name}"><svg width="13" height="13"><use href="#${t.open ? 'i-fold' : 'i-play'}"/></svg></button>`;
  const label = `<div class="label${t.head ? ' wide' : ''}${t.master ? ' roomy' : ''}" style="--c:${t.c};color:${t.light ? '#fff' : '#111'}">${icon}${t.name}</div>`;
  const pick = t.pick ? `<div class="chooser${t.flagged ? ' flagged' : ''}">${t.pick.map(p => `<div class="pick"><select class="v" aria-label="${t.name} automation"><option>${p}</option></select></div>`).join('')}</div>` : '';
  const add = t.sends ? `<button class="bare add" aria-label="Add automation lane"><svg width="13" height="13"><use href="#i-plus"/></svg></button>` : '';
  let cells;
  if (t.master) cells = field('0', 83, 'wide', 'Master volume') + field('0', 83, 'wide cool', 'Cue volume');
  else {
    cells = `<button class="act${t.off ? ' off' : ''}">${t.n}</button><button>S</button>`;
    if (t.rec) cells += '<button aria-label="Arm"><svg width="7" height="7"><circle cx="3.5" cy="3.5" r="3.5"/></svg></button>';
    if (t.vol) cells += field(t.vol[0], t.vol[1], 'wide start', 'Volume') + `<div class="wide pan">${field('C', 0, '', 'Pan')}</div>`;
    (t.sends || []).forEach(([v, p, dot]) => { cells += field(v, p, (v[1] === 'i' ? '' : 'cut-off') + (dot ? ' has-dot' : ''), 'Send'); });
  }
  return `<div class="track${t.amber ? ' amber' : ''}${t.master ? ' last' : ''}${t.beforeLast ? ' before-last' : ''}" style="--rows:${rows}"><div class="name">${label}${pick}${add}</div><div class="mixer"><div class="cells">${cells}</div><i class="bars${rows > 3 ? ' tall' : ''}"></i></div></div>`;
};
document.getElementById('heads').innerHTML =
  `<div class="group" style="--strip:#6cff48"><div class="strip top"><i></i></div><div class="group-body">${tracks.slice(0, 8).map(head).join('')}</div></div>` +
  `<div class="group" style="--strip:#a4385c"><div class="strip low"><i></i></div><div class="group-body">${tracks.slice(8, 12).map(head).join('')}</div></div>` +
  head(tracks[12]);

/* rotary controls */
const polar = (deg, rad) => { const a = (deg - 90) * Math.PI / 180; return `${(14 + rad * Math.cos(a)).toFixed(2)} ${(13 + rad * Math.sin(a)).toFixed(2)}`; };
document.querySelectorAll('.dial').forEach(d => {
  const { label, v, turn, arc } = d.dataset;
  const ink = d.classList.contains('dim') ? '#666' : '#151515';
  const mark = d.classList.contains('mark') ? '<path d="M10 -4.500h8l-4 4.500z" fill="#1aff2f" stroke="#5a2a2a"/>' : '';
  const t = +turn;
  const blue = arc ? `<path d="M${polar(-142, 12)}A12 12 0 ${t + 142 > 180 ? 1 : 0} 1 ${polar(t, 12)}" stroke="#4a4a8c"/>` : '';
  const shift = d.classList.contains('dim') ? 6 : 0;
  d.innerHTML = `<span>${label || ''}</span><svg role="slider" aria-label="${label || 'Envelope'}" aria-valuetext="${v}" width="28" height="${24 + shift}" viewBox="0 ${-shift} 28 ${24 + shift}" overflow="visible"><g fill="none" stroke-width="1.800"><path d="M${polar(-142, 12)}A12 12 0 1 1 ${polar(142, 12)}" stroke="${ink}"/>${blue}<path d="M14 13L${polar(t, 11.5)}" stroke="${ink}"/></g>${mark}</svg><span>${v}</span>`;
});

/* filter screen */
const line = (x1, y1, x2, y2, solid) => `<path d="M${x1} ${y1}L${x2} ${y2}" stroke="#4a4a4a" ${solid ? '' : 'stroke-dasharray="1 2"'}/>`;
let f = '';
[8.5, 26.5, 60.5, 76.5].forEach(y => { f += line(0, y, 153, y); });
f += line(0, 42.5, 153, 42.5, 1);
for (let d = 0; d < 4; d++) for (let k = 1; k < 10; k++) {
  const x = Math.round(3 + (d - 1) * 45.5 + 45.5 * Math.log10(k)) + .5;
  if (x > 2 && x < 152) f += line(x, 0, x, 93, k === 1 && d > 1);
}
f += '<path d="M65 93L90 57C97 44 99 37 104.500 37C110 37 113 47 122 59L147 93" fill="none" stroke="#f06400" stroke-width="1.300"/><circle cx="95.500" cy="57.500" r="5.500" fill="none" stroke="#efb700" stroke-width="1.800"/>';
document.getElementById('filter-screen').innerHTML = f;

/* EQ screen */
let e = '';
[['12', 14], ['6', 40], ['0', 66], ['−6', 94], ['−12', 120]].forEach(([t, y]) => {
  e += line(22, y + .5, 374, y + .5, t === '0') + `<text x="17" y="${y + 4}" text-anchor="end">${t}</text>`;
});
for (let d = 0; d < 4; d++) for (let k = 1; k < 10; k++) {
  const x = Math.round(68 + (d - 1) * 130.2 + 130.2 * Math.log10(k)) + .5;
  if (x > 28 && x < 372) e += line(x, 0, x, k === 1 ? 122 : 134, k === 1);
}
e += '<text x="59" y="132">100</text><text x="191" y="132">1k</text><text x="320" y="132">10k</text>';
e += '<path d="M48 134C62 114 78 98 92 89.500C102 84 108 83 115 83C132 83 142 95 155 107C163 113 171 113 177 108C187 99 193 94 203 93.500C213 94 220 103 229 103C240 103 248 89 265 88.500C290 87 306 108 324 134" fill="none" stroke="#f06400" stroke-width="1.300"/>';
e += [[1, 98, 84.5], [3, 167, 104.5], [6, 229, 91], [4, 285, 89.5]].map(([n, x, y]) =>
  `<circle cx="${x}" cy="${y}" r="5.500" fill="${n === 1 ? '#efb700' : '#070707'}" stroke="#efb700" stroke-width="1.500"/><text x="${x}" y="${y + 3.5}" text-anchor="middle" style="font-weight:bold;fill:${n === 1 ? '#fff' : '#efb700'}">${n}</text>`).join('');
const eq = document.getElementById('eq-screen');
eq.setAttribute('font-size', '10');
eq.setAttribute('font-family', 'Roboto, sans-serif');
eq.setAttribute('fill', '#777');
eq.innerHTML = e;

document.getElementById('bands').innerHTML = [['hp', 1], ['x4', 0], ['bell', 1], ['lp', 1], ['bell', 0], ['bell', 1], ['bell', 0], ['lp', 0]].map(([k, on], i) =>
  `<div class="bandcell${i ? '' : ' sel'}${on ? '' : ' off'}"><div class="pick"><select class="v" aria-label="Band ${i + 1} type"><option> </option></select><svg width="21" height="11"><use href="#f-${k}"/></svg></div><label><input type="checkbox"${on ? ' checked' : ''}>${i + 1}</label></div>`).join('');

/* footer thumbnails */
let s = rect(0, 0, 200, 15, '#d0b492') + rect(0, 0, 21, 15, '#a9a6a4') + rect(166, 0, 34, 15, '#a9a6a4');
for (let x = 0; x < 200; x++) { const a = .8 + rnd(x + 30) * (x < 45 ? 4.5 : 2.5); s += rect(x, (7.5 - a).toFixed(1), 1, (a * 2).toFixed(1), '#2b2f48'); }
document.getElementById('sample').innerHTML = s;

let m = '';
[[0, 13], [15, 13], [30, 25], [57, 41], [100, 20], [122, 13]].forEach(([x, w], i) => {
  m += rect(x, 0, w, 16, '#d0b492') + rect(x, 0, w, 2, '#e49d5c');
  if (i < 2 || i === 5) m += rect(x + 1, 3, w - 2, 11, '#070707');
  if (i === 2) m += rect(x + 5, 2, 13, 8, '#070707') + rect(x + 6, 11, 14, 1, '#1ae030') + rect(x + 8, 13, 12, 1, '#1ae030') + rect(x + 21, 6, 2, 2, '#1ea7f7');
  if (i === 3) m += rect(x + 4, 2, 32, 11, '#070707') + `<path d="M${x + 8} 12q5-5 9 0t8-2t8 2" fill="none" stroke="#c06010"/>` + rect(x + 37, 7, 3, 1, '#1ea7f7');
  if (i === 4) m += rect(x + 5, 2, 10, 13, '#070707') + rect(x + 16, 5, 3, 1, '#1ae030') + rect(x + 16, 7, 3, 1, '#1ea7f7');
});
document.getElementById('minis').innerHTML = m;
```
